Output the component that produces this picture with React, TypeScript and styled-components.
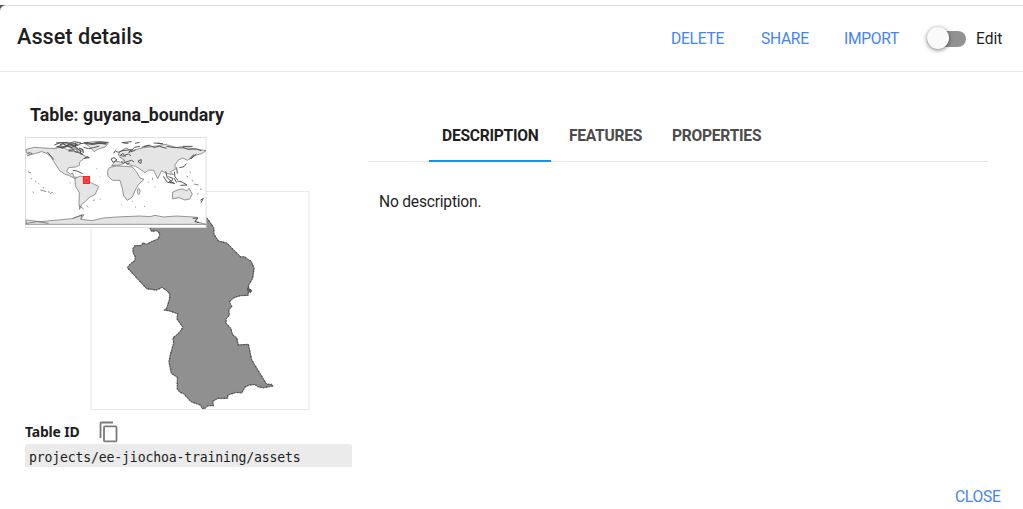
import React from "react";
import styled, { createGlobalStyle } from "styled-components";

const GlobalStyle = createGlobalStyle`
  * { box-sizing: border-box; }
  body { margin: 0; background: #fff; font-family: Roboto, sans-serif; color: #1f1f1f; }
`;
const Page = styled.div`
  height: 509px;
  padding-top: 5px;
  overflow: hidden;
  background: linear-gradient(#fff 0 5px, #555 5px 20px, #fff 20px);
`;
const Dialog = styled.main`
  height: 504px;
  display: flex;
  flex-direction: column;
  background: #fff;
  border-top: 1px solid #dcdcdc;
  border-top-left-radius: 6px;
`;
const Header = styled.header`
  height: 66px;
  flex: none;
  display: flex;
  align-items: center;
  padding: 0 21px 0 17px;
  border-bottom: 1px solid #e8e8e8;
`;
const Title = styled.h1`
  margin: 0 auto 4px 0;
  font-size: 21.7px;
  font-weight: 500;
  line-height: 28px;
`;
const TextButton = styled.button<{ $width: number; $gap?: number }>`
  width: ${(p) => p.$width}px;
  margin: 0 ${(p) => p.$gap ?? 0}px 0 0;
  padding: 0;
  border: 0;
  background: none;
  color: #4285f4;
  font: 400 15.6px/20px Roboto, sans-serif;
  letter-spacing: -0.28px;
  text-align: left;
  white-space: nowrap;
`;
const Switch = styled.span`
  width: 39px;
  height: 16px;
  margin-right: 10px;
  border-radius: 8px;
  background: #929292;
  display: flex;
  align-items: center;
`;
const Thumb = styled.span`
  flex: none;
  width: 22px;
  height: 22px;
  margin: 0 0 1px 0;
  border-radius: 50%;
  background: #fafafa;
  box-shadow: 0 1px 4px rgba(0, 0, 0, 0.55);
`;
const EditLabel = styled.span`
  width: 26px;
  font-size: 15.6px;
  line-height: 20px;
  white-space: nowrap;
`;
const Body = styled.div`
  flex: 1;
  display: flex;
  min-height: 0;
`;
const Side = styled.section`
  width: 368px;
  padding: 31px 16px 0 25px;
`;
const TableName = styled.h2`
  margin: 0 0 11px 5px;
  font-size: 17.8px;
  font-weight: 700;
  line-height: 23px;
  white-space: nowrap;
`;
const Maps = styled.div`
  position: relative;
  height: 273px;
  svg { display: block; }
`;
const WorldFrame = styled.div`
  position: absolute;
  left: 0;
  top: 0;
`;
const RegionFrame = styled.div`
  padding: 54px 0 0 65px;
`;
const IdRow = styled.div`
  height: 34px;
  display: flex;
  align-items: center;
  gap: 18px;
  padding-top: 10px;
`;
const IdLabel = styled.span`
  width: 56px;
  font: 700 14px/20px "Noto Sans", sans-serif;
  letter-spacing: -0.2px;
  white-space: nowrap;
`;
const IdValue = styled.code`
  display: block;
  height: 23px;
  padding: 0 4px;
  border-radius: 3px 3px 0 0;
  background: #ebebeb;
  font: 13.2px/28px "DejaVu Sans Mono", monospace;
  letter-spacing: -0.18px;
  white-space: nowrap;
`;
const Content = styled.section`
  width: 620px;
  padding-top: 38px;
`;
const Tabs = styled.nav`
  height: 52px;
  display: flex;
  gap: 5px;
  padding-left: 60.5px;
  border-bottom: 1px solid #e6e6e6;
`;
const Tab = styled.span<{ $width: number; $active?: boolean }>`
  width: ${(p) => p.$width}px;
  height: 52px;
  padding: 16px 0 0 13.5px;
  font-size: 15.6px;
  letter-spacing: -0.25px;
  line-height: 20px;
  font-weight: 700;
  white-space: nowrap;
  color: ${(p) => (p.$active ? "#1f1f1f" : "#4c4c4c")};
  border-bottom: 2px solid ${(p) => (p.$active ? "#1790f5" : "transparent")};
`;
const Description = styled.p`
  margin: 29px 0 0 11px;
  font-size: 15.6px;
  letter-spacing: -0.21px;
  line-height: 22px;
`;
const Footer = styled.footer`
  height: 22px;
  flex: none;
  display: flex;
  justify-content: flex-end;
  align-items: flex-start;
  padding-right: 22px;
`;

const WorldMap = () => (
  <svg width="182" height="91" viewBox="0 0 182 91">
    <rect x="0.5" y="0.5" width="180.5" height="90" fill="#fff" stroke="#dedede" />
    <g transform="translate(-5 -7) scale(.333333)" fill="#e5e5e5" stroke="#656565" strokeWidth="2" strokeLinejoin="round">
      <path d="M19 58L42 52 105 56 122 50 145 60 158 54 166 68 180 66 190 76 207 83 191 86 179 96 178 106 167 111 146 113 140 124 151 132 159 129 160 140 172 143 165 146 148 137 133 132 119 122 101 94 94 82 78 69 65 65 40 72 22 77 37 70 19 68Z" />
      <path d="M165 145L181 138 194 143 213 158 236 169 226 193 209 202 195 215 185 223 179 238 177 219 178 188 166 168Z" />
      <path d="M192 38L233 34 266 37 256 51 233 58 222 65 212 53Z" />
      <path d="M18 270L60 275 115 270 155 266 192 254 182 268 216 272 251 264 290 261 360 258 390 260 405 256 430 261 470 258 532 262 525 274 558 283H18Z" />
      <path d="M269 112L290 108 318 109 337 111 349 125 360 144 372 148 355 164 346 180 337 201 322 211 311 198 307 176 300 151 278 151 264 139 262 124Z" />
      <path d="M275 107L286 94 302 96 315 91 299 82 318 78 294 75 301 64 318 54 335 62 370 53 411 48 435 43 475 54 510 54 558 62 545 71 519 78 503 91 488 84 474 91 465 104 466 118 451 125 460 134 438 130 425 122 413 146 401 121 386 120 375 128 358 116 347 109 328 105 316 97 300 105Z" />
      <path d="M457 187L477 178 489 177 500 183 507 175 517 192 509 207 495 210 477 203 458 207Z" />
      <ellipse cx="356" cy="184" rx="4" ry="9" />
    </g>
    <g transform="translate(-5 -7) scale(.333333)" fill="none" stroke="#555" strokeWidth="3" strokeLinejoin="round">
      <path d="M103 45l18-7 25 2 18-5 19 4-9 7-21 1-18 4-14-4-14 5M108 39l34-2 11 5 16-2M146 63l20-7 11 12-14-5zM179 42l22-5 15 4 24-5 23 2M191 52l15 4 15-3 17-5M158 121l13 2 17 8M82 66l20 23" />
      <path d="M120 44l10-3 8 6 14-5 9 4 12-4M112 49l16 5 12-6 14 4 14-4M166 50l8 8 9 5-3 7 9 4M177 54l11 5 2 10M194 40l24 3 21-4 21 3M193 85l10-4 5 3" strokeWidth="4" />
      <path d="M273 87l9-4 9 7-12 7zM281 70l5-8 8 5 12-4M306 62l29-3-9 8 20-6M305 38l30-3M365 52l23-7M401 39l28 2M488 49h30M430 139l12 18 22 3-17-6M445 140l14 5-6 12M463 145l7 13M472 153l14 3 15 9-20 1M470 112l2 19M499 101l-7 9-14 3M522 73l-13 15M513 87l16-15M541 211l9-6-7 13M518 265l16-1-9 11 12 3" />
      <path d="M299 78l10-8 4 6 12-4 8 5M304 96l7 5 4-6 6 8 8-4M318 96l17-5 7 5M355 92l9-3-1 11-7-3zM335 61l8-9 17-3M372 49l18-2 12 5 16-3 22 6M440 49l24 4 22-2 18 7 25-1 15 5M437 124l5 20 11 9M463 125l2 16 8 9M310 39l15 1M345 40l14-3M413 39l13 3" />
      <path d="M24 125l9 4M45 153l4 2M61 180l18 5M90 191l8-4M200 227l5 4M239 207l3 1M346 230l1 3M372 228l3 2M509 126l4 3M522 162l14 3M540 177l5 1M31 67l-11 6M18 280l35-5 33 5M158 266l28-12-3 12M178 227l13 10M32 145l4 2M56 160l3 3M68 172l4 2M38 186l4 1M84 185l6 2M149 157l3 2M219 211l5-1M229 116l3 1M240 140l2 2M384 155l2 3M397 143l1 6M404 170l3 1M500 139l4 2M515 150l5 4M531 193l5-3M303 223l2 2M337 213l1 2" strokeWidth="2" />
    </g>
    <rect x="58.5" y="39.5" width="6" height="7" fill="#ff4545" stroke="#ff2222" />
    <path d="M61 42l1 1-1 2" fill="none" stroke="#b83434" />
  </svg>
);

const regionPath = "M180 128L184 139 200 137 208 143 209 152 204 162 185 170 170 178 158 174 155 182 135 182 129 190 130 205 136 215 135 227 123 235 112 248 145 284 170 311 200 315 216 307 228 315 240 327 238 345 230 370 223 375 240 378 263 386 261 402 279 427 266 445 249 459 251 475 242 505 237 530 244 565 262 577 262 612 270 622 280 625 303 650 332 660 336 670 345 670 354 662 370 662 368 648 385 640 413 640 413 630 438 622 455 624 465 606 478 600 495 598 503 605 520 608 548 603 545 598 530 598 485 525 475 478 445 480 440 458 428 450 422 430 408 415 408 402 418 390 416 375 425 365 418 350 432 338 450 332 474 331 476 300 488 280 492 250 484 230 462 215 452 216 410 174 385 168 372 148 371 128 350 98 320 100 190 110Z";

const RegionMap = () => (
  <svg width="220" height="219" viewBox="0 0 220 219">
    <rect x="1" y="0.5" width="218" height="218" fill="#fff" stroke="#e8e8e8" />
    <g transform="translate(0 -6) scale(.333333)" strokeLinejoin="round">
      <path d={regionPath} fill="#909090" stroke="#686868" strokeWidth="3" />
      <path d={regionPath} fill="none" stroke="#4f4f4f" strokeWidth="4" strokeDasharray="4 5 2 6" />
      <path d="M473 309l12 7-3 7-9-7z" fill="#606060" stroke="#505050" strokeWidth="3" />
    </g>
  </svg>
);

const CopyIcon = () => (
  <svg width="20" height="22" viewBox="0 0 20 22" fill="none" stroke="#7b7b7b" strokeWidth="1.8">
    <path d="M1.5 17V2.5Q1.5 1.5 2.5 1.5H14" />
    <rect x="5" y="5.4" width="12.5" height="15" rx="1" />
  </svg>
);

export default function App() {
  return (
    <Page>
      <GlobalStyle />
      <Dialog>
        <Header>
          <Title>Asset details</Title>
          <TextButton $width={54} $gap={36}>DELETE</TextButton>
          <TextButton $width={48} $gap={35}>SHARE</TextButton>
          <TextButton $width={56} $gap={27}>IMPORT</TextButton>
          <Switch><Thumb /></Switch>
          <EditLabel>Edit</EditLabel>
        </Header>
        <Body>
          <Side>
            <TableName>Table: guyana_boundary</TableName>
            <Maps>
              <RegionFrame><RegionMap /></RegionFrame>
              <WorldFrame><WorldMap /></WorldFrame>
            </Maps>
            <IdRow><IdLabel>Table ID</IdLabel><CopyIcon /></IdRow>
            <IdValue>projects/ee-jiochoa-training/assets</IdValue>
          </Side>
          <Content>
            <Tabs>
              <Tab $width={122} $active>DESCRIPTION</Tab>
              <Tab $width={98}>FEATURES</Tab>
              <Tab $width={120}>PROPERTIES</Tab>
            </Tabs>
            <Description>No description.</Description>
          </Content>
        </Body>
        <Footer><TextButton $width={46}>CLOSE</TextButton></Footer>
      </Dialog>
    </Page>
  );
}
